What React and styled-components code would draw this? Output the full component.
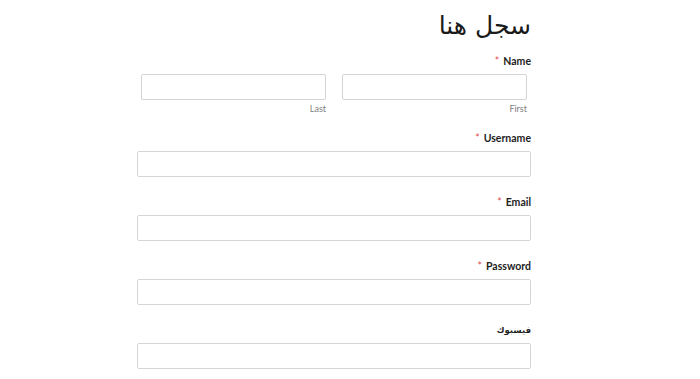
import React from 'react';
import styled, { createGlobalStyle } from 'styled-components';

const GlobalStyle = createGlobalStyle`
    body{
        margin: 0;
        background: #fff;
        font-family: Lato, "DejaVu Sans", sans-serif;
    }
`;

const Field = ({ label, required, children, tight, arabic }) => (
    <FieldBox $tight={tight}>
        <Label $arabic={arabic}>
            {required && <Star>*</Star>}
            {label}
        </Label>
        {children}
    </FieldBox>
);

const App = () => {
    return (
        <>
            <GlobalStyle />
            <Form dir="rtl">
                <Title>سجل هنا</Title>
                <Field label="Name" required tight>
                    <NameRow>
                        <NamePart>
                            <Input />
                            <SubLabel>First</SubLabel>
                        </NamePart>
                        <NamePart>
                            <Input />
                            <SubLabel>Last</SubLabel>
                        </NamePart>
                    </NameRow>
                </Field>
                <Field label="Username" required>
                    <Input />
                </Field>
                <Field label="Email" required>
                    <Input />
                </Field>
                <Field label="Password" required>
                    <Input type="password" />
                </Field>
                <Field label="فيسبوك" arabic>
                    <Input />
                </Field>
            </Form>
        </>
    );
};

export default App;

const Form = styled.div`
    width: 394px;
    margin-left: 137px;
    padding-top: 9px;
    display: flex;
    flex-direction: column;
`;

const Title = styled.h1`
    margin: 0 0 10px;
    font-family: "DejaVu Sans", sans-serif;
    font-size: 25px;
    font-weight: 400;
    line-height: 34px;
    color: #1a1a1a;
`;

const FieldBox = styled.div`
    display: flex;
    flex-direction: column;
    margin-bottom: ${p => (p.$tight ? '15px' : '17px')};
`;

const Label = styled.label`
    display: flex;
    gap: 4px;
    font-family: ${p => (p.$arabic ? '"DejaVu Sans", sans-serif' : 'Lato, sans-serif')};
    font-size: ${p => (p.$arabic ? '8.5px' : '10.5px')};
    font-weight: 700;
    line-height: 14px;
    color: #1e1e1e;
    margin: 1px 0 6px;
    direction: ltr;
    justify-content: flex-end;
`;

const Star = styled.span`
    color: #e05050;
    font-weight: 400;
`;

const NameRow = styled.div`
    display: flex;
    gap: 16px;
    padding: 0 4px;
`;

const NamePart = styled.div`
    flex: 1;
    display: flex;
    flex-direction: column;
`;

const SubLabel = styled.span`
    font-size: 9px;
    line-height: 12px;
    margin-top: 3px;
    color: #808080;
`;

const Input = styled.input`
    box-sizing: border-box;
    width: 100%;
    height: 26px;
    border: 1px solid #d4d4d4;
    border-radius: 2px;
    background: #fff;
    outline: none;
`;
